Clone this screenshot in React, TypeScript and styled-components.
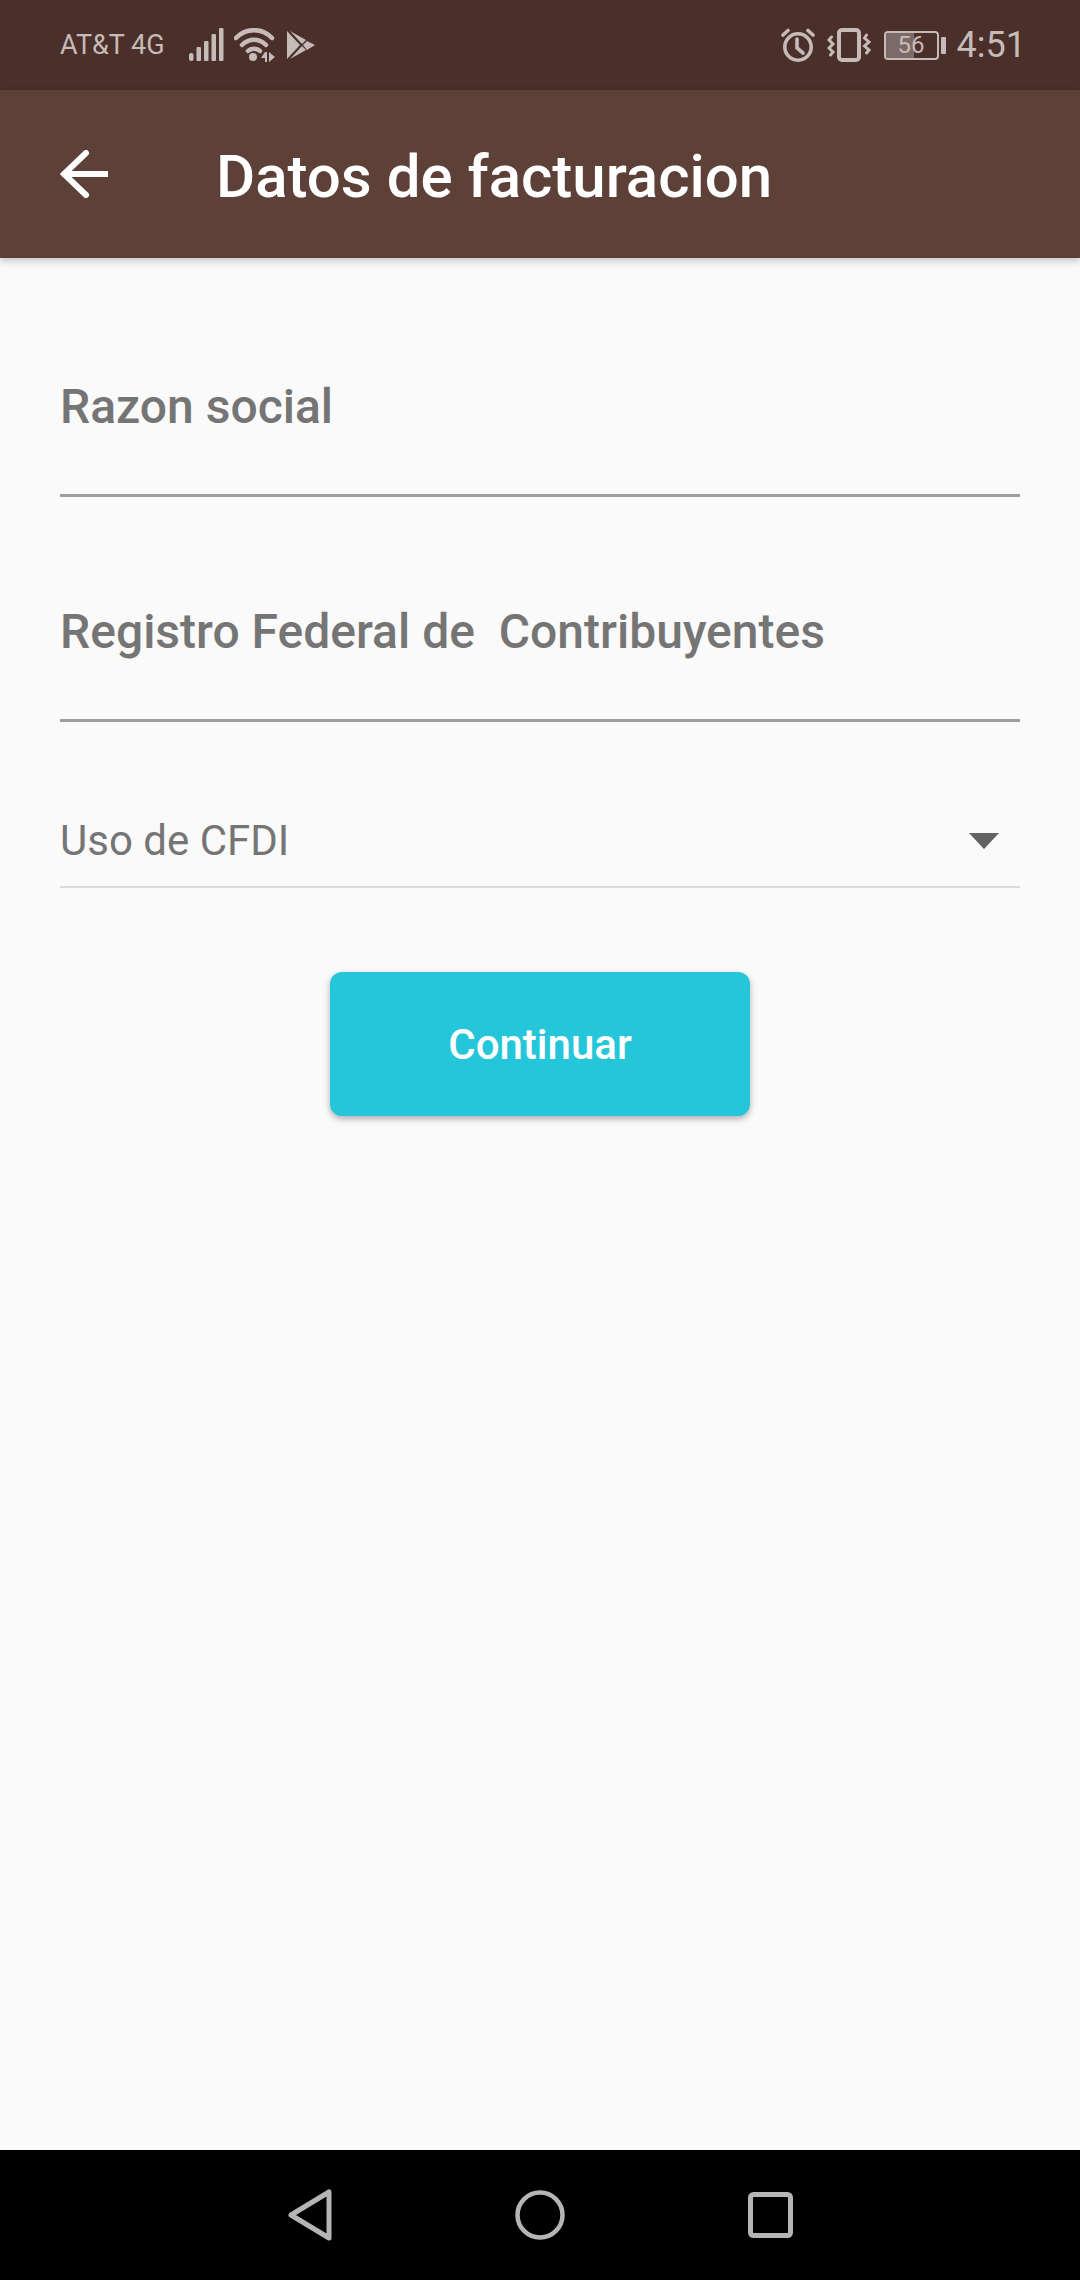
import styled, { createGlobalStyle } from "styled-components";

const GlobalStyle = createGlobalStyle`
  html, body {
    margin: 0;
    padding: 0;
    background: #fafafa;
  }
  * {
    box-sizing: border-box;
  }
`;

const Screen = styled.div`
  display: flex;
  flex-direction: column;
  width: 1080px;
  height: 2280px;
  overflow: hidden;
  background: #fafafa;
  font-family: Roboto, "Liberation Sans", sans-serif;
`;

const StatusBar = styled.div`
  display: flex;
  align-items: center;
  justify-content: space-between;
  height: 90px;
  padding: 0 54px 0 60px;
  background: #4a2f2a;
  color: #c6bbb8;
`;

const StatusGroup = styled.div`
  display: flex;
  align-items: center;
`;

const Carrier = styled.span`
  font-size: 27px;
  margin-right: 24px;
`;

const Clock = styled.span`
  font-size: 36px;
  margin-left: 11px;
`;

const StatusIcon = styled.svg<{ $gap?: number }>`
  display: block;
  margin-left: ${(p) => p.$gap ?? 0}px;
`;

const Battery = styled.div`
  position: relative;
  width: 55px;
  height: 29px;
  margin-left: 13px;
  border: 2px solid #c6bbb8;
  border-radius: 4px;
  display: flex;
  align-items: center;
  justify-content: center;
  font-size: 24px;
  overflow: hidden;
`;

const BatteryFill = styled.div`
  position: absolute;
  left: 0;
  top: 0;
  bottom: 0;
  background: #7b6a66;
`;

const BatteryLabel = styled.span`
  position: relative;
`;

const BatteryNub = styled.div`
  width: 5px;
  height: 17px;
  margin-left: 2px;
  border-radius: 1px;
  background: #c6bbb8;
`;

const AppBar = styled.header`
  position: relative;
  display: flex;
  align-items: center;
  height: 168px;
  padding-left: 60px;
  background: #5d4037;
  color: #fff;
  box-shadow: 0 3px 8px rgba(0, 0, 0, 0.22);
`;

const Title = styled.h1`
  margin: 6px 0 0 108px;
  font-size: 60px;
  font-weight: 500;
  line-height: 1;
`;

const Form = styled.main`
  flex: 1;
  display: flex;
  flex-direction: column;
  padding: 0 60px;
`;

const TextField = styled.div<{ $top: number }>`
  display: flex;
  align-items: center;
  height: 112px;
  margin-top: ${(p) => p.$top}px;
  padding-bottom: 66px;
  border-bottom: 3px solid #9e9e9e;
  font-size: 48px;
  font-weight: 500;
  color: #757575;
`;

const SelectField = styled.div`
  display: flex;
  align-items: center;
  justify-content: space-between;
  height: 82px;
  margin-top: 84px;
  padding: 0 21px 12px 0;
  border-bottom: 2px solid #dcdcdc;
  font-size: 42px;
  color: #757575;
`;

const Caret = styled.div`
  width: 0;
  height: 0;
  margin-top: 2px;
  border-left: 15px solid transparent;
  border-right: 15px solid transparent;
  border-top: 16px solid #616161;
`;

const SubmitButton = styled.button`
  align-self: center;
  width: 420px;
  height: 144px;
  margin-top: 84px;
  border: 0;
  border-radius: 12px;
  background: #26c6da;
  color: #fff;
  font-family: inherit;
  font-size: 42px;
  font-weight: 500;
  box-shadow: 0 3px 6px rgba(0, 0, 0, 0.3);
`;

const NavBar = styled.nav`
  display: flex;
  align-items: center;
  justify-content: center;
  gap: 183px;
  height: 130px;
  background: #000;
`;

function SignalIcon() {
  return (
    <StatusIcon width="36" height="34" viewBox="0 0 36 34" $gap={0}>
      <g fill="#c6bbb8">
        <rect x="0" y="25" width="4.5" height="8" rx="2" />
        <rect x="7.5" y="19" width="4.5" height="14" rx="1" />
        <rect x="15" y="13" width="4.5" height="20" rx="1" />
        <rect x="22.5" y="6" width="4.5" height="27" rx="1" />
        <rect x="30" y="0" width="4.5" height="33" rx="1" />
      </g>
    </StatusIcon>
  );
}

function WifiIcon() {
  return (
    <StatusIcon width="42" height="34" viewBox="0 0 42 34" $gap={9}>
      <g fill="none" stroke="#c6bbb8" strokeWidth="4.5" strokeLinecap="round">
        <path d="M2 10 C12 -0.5 28 -0.5 38 10" />
        <path d="M8 17 C15 10 25 10 32 17" />
        <path d="M14 23 C17 20 23 20 26 23" />
      </g>
      <circle cx="19" cy="29" r="4" fill="#c6bbb8" />
      <path d="M31 24 L27 30 H31 V34 H33 V24 Z M35 24 V34 L41 29 Z" fill="#c6bbb8" />
    </StatusIcon>
  );
}

function PlayIcon() {
  return (
    <StatusIcon width="28" height="30" viewBox="0 0 28 30" $gap={11}>
      <path d="M0 1 L13 15 L0 29 Z" fill="#c6bbb8" />
      <path d="M3 1 L19 10 L15 14 Z M20 11 L28 15 L20 20 L16 15 Z M3 29 L19 20 L15 16 Z" fill="#c6bbb8" />
    </StatusIcon>
  );
}

function AlarmIcon() {
  return (
    <StatusIcon width="34" height="34" viewBox="0 0 34 34">
      <g fill="none" stroke="#c6bbb8" strokeWidth="3.6" strokeLinecap="round">
        <circle cx="17" cy="19" r="13.2" />
        <path d="M16 11 V20 L22 25" />
        <path d="M2 7 L7 2.5" />
        <path d="M32 7 L27 2.5" />
      </g>
    </StatusIcon>
  );
}

function VibrateIcon() {
  return (
    <StatusIcon width="44" height="34" viewBox="0 0 44 34" $gap={12}>
      <rect x="12" y="2" width="20" height="30" rx="3" fill="none" stroke="#c6bbb8" strokeWidth="4" />
      <g fill="none" stroke="#c6bbb8" strokeWidth="3" strokeLinecap="round">
        <path d="M4.5 9 L2 12 L6 16 L2 20 L6 24 L3.5 27" />
        <path d="M39.5 7 L37.5 10 L42 14 L37.5 18 L42 22 L39.5 25" />
      </g>
    </StatusIcon>
  );
}

function ArrowBack() {
  return (
    <svg width="48" height="48" viewBox="0 0 48 48" style={{ display: "block" }}>
      <path
        d="M47 24 H4 M26 3 L4 24 L26 45"
        fill="none"
        stroke="#fff"
        strokeWidth="6"
        strokeLinecap="round"
        strokeLinejoin="miter"
      />
    </svg>
  );
}

function NavBack() {
  return (
    <svg width="44" height="52" viewBox="0 0 44 52" style={{ display: "block" }}>
      <path
        d="M41 3 V49 L3 26 Z"
        fill="none"
        stroke="#b5b5b5"
        strokeWidth="5"
        strokeLinejoin="round"
      />
    </svg>
  );
}

function NavHome() {
  return (
    <svg width="50" height="50" viewBox="0 0 50 50" style={{ display: "block" }}>
      <circle cx="25" cy="25" r="22.5" fill="none" stroke="#b5b5b5" strokeWidth="4.5" />
    </svg>
  );
}

function NavRecents() {
  return (
    <svg width="45" height="46" viewBox="0 0 45 46" style={{ display: "block" }}>
      <rect x="2.5" y="2.5" width="40" height="41" rx="3" fill="none" stroke="#b5b5b5" strokeWidth="5" />
    </svg>
  );
}

export default function App() {
  const batteryLevel = 56;

  return (
    <Screen>
      <GlobalStyle />
      <StatusBar>
        <StatusGroup>
          <Carrier>AT&amp;T 4G</Carrier>
          <SignalIcon />
          <WifiIcon />
          <PlayIcon />
        </StatusGroup>
        <StatusGroup>
          <AlarmIcon />
          <VibrateIcon />
          <Battery>
            <BatteryFill style={{ width: `${batteryLevel}%` }} />
            <BatteryLabel>{batteryLevel}</BatteryLabel>
          </Battery>
          <BatteryNub />
          <Clock>4:51</Clock>
        </StatusGroup>
      </StatusBar>
      <AppBar>
        <ArrowBack />
        <Title>Datos de facturacion</Title>
      </AppBar>
      <Form>
        <TextField $top={127}>Razon social</TextField>
        <TextField $top={113}>Registro Federal de&nbsp; Contribuyentes</TextField>
        <SelectField>
          Uso de CFDI
          <Caret />
        </SelectField>
        <SubmitButton>Continuar</SubmitButton>
      </Form>
      <NavBar>
        <NavBack />
        <NavHome />
        <NavRecents />
      </NavBar>
    </Screen>
  );
}
